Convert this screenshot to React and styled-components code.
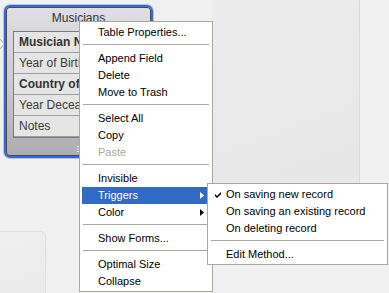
import React from 'react'
import styled, { createGlobalStyle } from 'styled-components'

const GlobalStyle = createGlobalStyle`
  html, body {
    margin: 0;
    padding: 0;
  }
  body {
    background: #f0f0f0;
    font-family: 'Liberation Sans', Arial, sans-serif;
  }
`

const Canvas = styled.div`
  position: relative;
  width: 389px;
  height: 293px;
  overflow: hidden;
  background: #f0f0f0;
`

const BackPanel = styled.div`
  position: absolute;
  left: 212px;
  top: 0;
  width: 147px;
  height: 220px;
  background: linear-gradient(160deg, #ececec, #e6e6e6);
  border-right: 1px solid #dadada;
`

const SidePanel = styled.div`
  position: absolute;
  left: -1px;
  top: 231px;
  width: 45px;
  height: 70px;
  background: linear-gradient(160deg, #efefef, #eaeaea);
  border: 1px solid #dfdfdf;
  border-top-right-radius: 5px;
`

const Connector = styled.svg`
  position: absolute;
  left: 0;
  top: 38px;
`

const TableNode = styled.div`
  position: absolute;
  left: 4px;
  top: 5px;
  width: 149px;
  height: 153px;
  box-sizing: border-box;
  border: 2px solid #3569d2;
  border-radius: 6px;
  box-shadow: 0 0 0 1px #b4c6ea, inset 0 0 0 1px #4c4c4c;
  background: linear-gradient(#dfdfe3, #cacace 55%, #acacb0);
  display: flex;
  flex-direction: column;
  padding: 0 7px;
`

const NodeTitle = styled.div`
  height: 24px;
  line-height: 22px;
  text-align: center;
  font-size: 12px;
  color: #333;
`

const FieldList = styled.div`
  display: flex;
  flex-direction: column;
  border: 1px solid #7c7c7c;
  background: #d6d6d6;
`

const Field = styled.div`
  height: 20px;
  line-height: 20px;
  border-bottom: 1px solid #9e9e9e;
  background: #e5e5e5;
  padding-left: 5px;
  font-size: 12px;
  font-weight: ${p => (p.$key ? 'bold' : 'normal')};
  color: ${p => (p.$key ? '#333' : '#3c3c3c')};
  white-space: nowrap;
  overflow: hidden;
`

const NodeFooter = styled.div`
  flex: 1;
  display: flex;
  justify-content: center;
  padding-top: 8px;
`

const Menu = styled.div`
  position: absolute;
  left: ${p => p.$x}px;
  top: ${p => p.$y}px;
  width: ${p => p.$w}px;
  box-sizing: border-box;
  background: #fff;
  border: 1px solid #aca899;
  padding: 2px 2px 1px;
  display: flex;
  flex-direction: column;
  font-size: 11px;
  font-family: 'Liberation Sans', Arial, sans-serif;
`

const Item = styled.div`
  display: grid;
  grid-template-columns: 16px 1fr 12px;
  align-items: center;
  height: 17px;
  white-space: nowrap;
  color: ${p => (p.$disabled ? '#aca899' : p.$active ? '#fff' : '#000')};
  background: ${p => (p.$active ? '#316ac5' : 'transparent')};
`

const Label = styled.span`
  line-height: 13px;
`

const Mark = styled.span`
  display: flex;
  align-items: center;
  padding-left: 5px;
`

const Arrow = styled.span`
  display: flex;
  align-items: center;
  padding-left: 2px;
`

const Separator = styled.div`
  height: 1px;
  background: #aca899;
  margin: 3px 1px 5px;
`

const Check = () => (
  <svg width="7" height="7" viewBox="0 0 7 7">
    <path d="M0 3 L2 5 L6 1 L6 3.2 L2 7 L0 5 Z" fill="#000" />
  </svg>
)

const SubArrow = ({ color }) => (
  <svg width="4" height="7" viewBox="0 0 4 7">
    <path d="M0 0 L4 3.5 L0 7 Z" fill={color} />
  </svg>
)

const Grip = () => (
  <svg width="4" height="6" viewBox="0 0 4 6">
    <rect x="0" y="0" width="4" height="1" fill="#e6e6e8" />
    <rect x="0" y="2.5" width="4" height="1" fill="#e6e6e8" />
    <rect x="0" y="5" width="4" height="1" fill="#e6e6e8" />
  </svg>
)

const fields = [
  { name: 'Musician Name', key: true },
  { name: 'Year of Birth' },
  { name: 'Country of Origin', key: true },
  { name: 'Year Deceased' },
  { name: 'Notes' },
]

const MenuEntry = ({ label, active, disabled, sub, checked }) => (
  <Item $active={active} $disabled={disabled}>
    <Mark>{checked && <Check />}</Mark>
    <Label>{label}</Label>
    <Arrow>{sub && <SubArrow color={active ? '#fff' : '#000'} />}</Arrow>
  </Item>
)

export default function App() {
  return (
    <Canvas>
      <GlobalStyle />
      <BackPanel />
      <SidePanel />
      <Connector width="6" height="14" viewBox="0 0 6 14">
        <polyline points="0,1 4,6 0,11" fill="none" stroke="#b4b4b4" strokeWidth="1" />
      </Connector>

      <TableNode>
        <NodeTitle>Musicians</NodeTitle>
        <FieldList>
          {fields.map(f => (
            <Field key={f.name} $key={f.key}>{f.name}</Field>
          ))}
        </FieldList>
        <NodeFooter>
          <Grip />
        </NodeFooter>
      </TableNode>

      <Menu $x={79} $y={21} $w={134}>
        <MenuEntry label="Table Properties..." />
        <Separator />
        <MenuEntry label="Append Field" />
        <MenuEntry label="Delete" />
        <MenuEntry label="Move to Trash" />
        <Separator />
        <MenuEntry label="Select All" />
        <MenuEntry label="Copy" />
        <MenuEntry label="Paste" disabled />
        <Separator />
        <MenuEntry label="Invisible" />
        <MenuEntry label="Triggers" active sub />
        <MenuEntry label="Color" sub />
        <Separator />
        <MenuEntry label="Show Forms..." />
        <Separator />
        <MenuEntry label="Optimal Size" />
        <MenuEntry label="Collapse" />
      </Menu>

      <Menu $x={207} $y={183} $w={181}>
        <MenuEntry label="On saving new record" checked />
        <MenuEntry label="On saving an existing record" />
        <MenuEntry label="On deleting record" />
        <Separator />
        <MenuEntry label="Edit Method..." />
      </Menu>
    </Canvas>
  )
}
